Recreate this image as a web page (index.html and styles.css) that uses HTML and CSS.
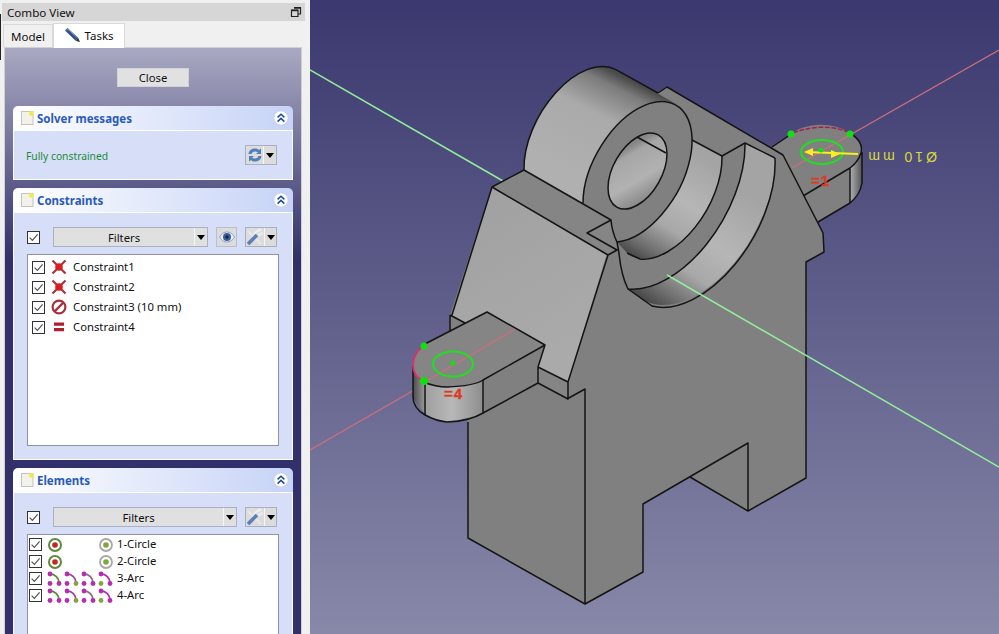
FILE: index.html
```html
<!DOCTYPE html>
<html lang="en">
<head>
<meta charset="utf-8">
<title>Combo View</title>
<link rel="stylesheet" href="styles.css">
</head>
<body>
<svg class="defs" width="0" height="0" aria-hidden="true">
  <defs>
    <symbol id="page" viewBox="0 0 13 14">
      <rect x="0.5" y="0.5" width="11.5" height="13" fill="#f2f2ea" stroke="#c4c4bc"/>
      <circle cx="10.5" cy="2.5" r="2.4" fill="#f4e94c"/>
    </symbol>
    <symbol id="collapse" viewBox="0 0 16 16">
      <circle cx="8" cy="8" r="7.2" fill="#fff" stroke="#c5cfe8"/>
      <path d="M4.6 7.4 8 4.2l3.4 3.2M4.6 11.6 8 8.4l3.4 3.2" fill="none" stroke="#1d4a9c" stroke-width="1.5"/>
    </symbol>
    <symbol id="caret" viewBox="0 0 8 5">
      <path d="M0 0h8L4 5z" fill="#000"/>
    </symbol>
    <symbol id="tick" viewBox="0 0 13 13">
      <rect x="0.5" y="0.5" width="12" height="12" fill="#fff" stroke="#333"/>
      <path d="M2.6 6.6 5.4 9.4 10.6 3.4" fill="none" stroke="#555" stroke-width="1.2"/>
    </symbol>
    <symbol id="coincident" viewBox="0 0 16 16">
      <path d="M1.5 1.5 14.5 14.5M14.5 1.5 1.5 14.5" stroke="#a8343f" stroke-width="2.2"/>
      <circle cx="8" cy="8" r="3.8" fill="#d81e1e"/>
    </symbol>
    <symbol id="diameter" viewBox="0 0 16 16">
      <circle cx="8" cy="8" r="6.4" fill="none" stroke="#a8303c" stroke-width="2.2"/>
      <path d="M3.4 12.6 12.6 3.4" stroke="#a8303c" stroke-width="2.2"/>
    </symbol>
    <symbol id="equal" viewBox="0 0 16 16">
      <path d="M3 3.5h10v3.2H3zM3 9h10v3.2H3z" fill="#b0202c"/>
    </symbol>
    <symbol id="circle-el" viewBox="0 0 16 16">
      <circle cx="8" cy="8" r="6" fill="#fff" stroke="#5f8a3c" stroke-width="2"/>
      <circle cx="8" cy="8" r="2.8" fill="#c42626"/>
    </symbol>
    <symbol id="circle-pt" viewBox="0 0 16 16">
      <circle cx="8" cy="8" r="6" fill="#fff" stroke="#a8a8a8" stroke-width="1.8"/>
      <circle cx="8" cy="8" r="2.8" fill="#7fa83c"/>
    </symbol>
    <symbol id="arc-a" viewBox="0 0 16 16">
      <path d="M3 3C8 3 12 7 12 12" fill="none" stroke="#5f8a3c" stroke-width="1.8"/>
      <circle cx="3" cy="3" r="2.4" fill="#b52eb0"/><circle cx="3" cy="12.5" r="2.4" fill="#b52eb0"/><circle cx="12" cy="12.5" r="2.4" fill="#b52eb0"/>
    </symbol>
    <symbol id="arc-b" viewBox="0 0 16 16">
      <path d="M3 3C8 3 12 7 12 12" fill="none" stroke="#a0489a" stroke-width="1.8"/>
      <circle cx="3" cy="3" r="2.4" fill="#b52eb0"/><circle cx="3" cy="12.5" r="2.4" fill="#b52eb0"/><circle cx="12" cy="12.5" r="2.4" fill="#7fa83c"/>
    </symbol>
    <symbol id="arc-c" viewBox="0 0 16 16">
      <path d="M3 3C8 3 12 7 12 12" fill="none" stroke="#8f6a90" stroke-width="1.8"/>
      <circle cx="3" cy="3" r="2.4" fill="#b52eb0"/><circle cx="3" cy="12.5" r="2.4" fill="#b52eb0"/><circle cx="12" cy="12.5" r="2.4" fill="#b52eb0"/>
    </symbol>
    <symbol id="arc-d" viewBox="0 0 16 16">
      <path d="M3 3C8 3 12 7 12 12" fill="none" stroke="#b52eb0" stroke-width="1.8"/>
      <circle cx="3" cy="3" r="2.4" fill="#b52eb0"/><circle cx="3" cy="12.5" r="2.4" fill="#7fa83c"/><circle cx="12" cy="12.5" r="2.4" fill="#b52eb0"/>
    </symbol>
    <symbol id="tools" viewBox="0 0 18 18">
      <path d="M10 4 15 1M11 8l6-3M8 6l3-3" stroke="#eeeeee" stroke-width="2.4"/>
      <path d="M2 3 15 16" stroke="#e8e8e8" stroke-width="2"/>
      <path d="M2 16 11 7" stroke="#5b7fb8" stroke-width="3.6"/>
    </symbol>
  </defs>
</svg>

<div class="app">
  <aside class="dock">
    <div class="sliver"></div>
    <header class="dock-title">
      <span>Combo View</span>
      <svg class="float-icon" width="12" height="12" viewBox="0 0 12 12"><path d="M4 1.5h6.5v6.5H8M1.5 4H8v6.5H1.5z" fill="none" stroke="#222" stroke-width="1.2"/><path d="M4 2h6.5M1.5 4.5H8" stroke="#222" stroke-width="1.5"/></svg>
    </header>
    <nav class="tabs">
      <div class="tab">Model</div>
      <div class="tab tab-active">
        <svg width="17" height="17" viewBox="0 0 17 17"><path d="M1 3.5 3.5 1 14 10.5 12 14z" fill="#2f4f8a"/><path d="M12 14l2-3.5 2 4.500z" fill="#333"/><path d="M2.500 3.500 4 2.300 13 10.600" fill="none" stroke="#7f9bc9"/></svg>
        <span>Tasks</span>
      </div>
    </nav>
    <main class="pane">
      <div class="close-row"><button class="close-btn">Close</button></div>

      <section class="box box-solver">
        <div class="box-head">
          <svg class="page-icon" width="13" height="14"><use href="#page"/></svg>
          <h2>Solver messages</h2>
          <svg class="collapse" width="16" height="16"><use href="#collapse"/></svg>
        </div>
        <div class="box-body solver-body">
          <span class="status">Fully constrained</span>
          <div class="tool-btn">
            <span class="tool-main">
              <svg width="16" height="16" viewBox="0 0 16 16"><path d="M1.5 7C2 3 5 1.5 8 1.5c2 0 3 .5 4 1.5l2-1.500V7H9l2-1.500C10.300 4.800 9.300 4.500 8 4.500 6 4.500 5 5.500 4.500 7zM14.500 9c-.5 4-3.500 5.500-6.500 5.500-2 0-3-.5-4-1.500l-2 1.500V9h5l-2 1.500c.7.7 1.700 1 3 1 2 0 3-1 3.500-2.500z" fill="#4f7fbd"/></svg>
            </span>
            <span class="tool-arrow"><svg width="8" height="5"><use href="#caret"/></svg></span>
          </div>
        </div>
      </section>

      <section class="box box-constraints">
        <div class="box-head">
          <svg class="page-icon" width="13" height="14"><use href="#page"/></svg>
          <h2>Constraints</h2>
          <svg class="collapse" width="16" height="16"><use href="#collapse"/></svg>
        </div>
        <div class="box-body list-body">
          <div class="filter-row">
            <svg class="head-check" width="13" height="13"><use href="#tick"/></svg>
            <div class="combo">
              <span class="combo-label">Filters</span>
              <span class="combo-arrow"><svg width="8" height="5"><use href="#caret"/></svg></span>
            </div>
            <div class="eye-btn">
              <svg width="16" height="12" viewBox="0 0 16 12"><path d="M.5 6C3 2 5.5 1 8 1s5 1 7.5 5C13 10 10.5 11 8 11S3 10 .5 6z" fill="#e8edf6" stroke="#8aa0c4"/><circle cx="8" cy="6" r="4" fill="#3d5f9c"/><circle cx="8" cy="6" r="1.8" fill="#16264a"/></svg>
            </div>
            <div class="tool-btn">
              <span class="tool-main"><svg width="18" height="18"><use href="#tools"/></svg></span>
              <span class="tool-arrow"><svg width="8" height="5"><use href="#caret"/></svg></span>
            </div>
          </div>
          <ul class="list list-constraints">
            <li><svg width="13" height="13"><use href="#tick"/></svg><svg class="row-icon" width="16" height="16"><use href="#coincident"/></svg><span class="row-text">Constraint1</span></li>
            <li><svg width="13" height="13"><use href="#tick"/></svg><svg class="row-icon" width="16" height="16"><use href="#coincident"/></svg><span class="row-text">Constraint2</span></li>
            <li><svg width="13" height="13"><use href="#tick"/></svg><svg class="row-icon" width="16" height="16"><use href="#diameter"/></svg><span class="row-text">Constraint3 (10 mm)</span></li>
            <li><svg width="13" height="13"><use href="#tick"/></svg><svg class="row-icon" width="16" height="16"><use href="#equal"/></svg><span class="row-text">Constraint4</span></li>
          </ul>
        </div>
      </section>

      <section class="box box-elements">
        <div class="box-head">
          <svg class="page-icon" width="13" height="14"><use href="#page"/></svg>
          <h2>Elements</h2>
          <svg class="collapse" width="16" height="16"><use href="#collapse"/></svg>
        </div>
        <div class="box-body list-body">
          <div class="filter-row">
            <svg class="head-check" width="13" height="13"><use href="#tick"/></svg>
            <div class="combo combo-wide">
              <span class="combo-label">Filters</span>
              <span class="combo-arrow"><svg width="8" height="5"><use href="#caret"/></svg></span>
            </div>
            <div class="tool-btn">
              <span class="tool-main"><svg width="18" height="18"><use href="#tools"/></svg></span>
              <span class="tool-arrow"><svg width="8" height="5"><use href="#caret"/></svg></span>
            </div>
          </div>
          <ul class="list list-elements">
            <li><svg width="13" height="13"><use href="#tick"/></svg><span class="icons"><svg width="16" height="16"><use href="#circle-el"/></svg><i></i><i></i><svg width="16" height="16"><use href="#circle-pt"/></svg></span><span class="row-text">1-Circle</span></li>
            <li><svg width="13" height="13"><use href="#tick"/></svg><span class="icons"><svg width="16" height="16"><use href="#circle-el"/></svg><i></i><i></i><svg width="16" height="16"><use href="#circle-pt"/></svg></span><span class="row-text">2-Circle</span></li>
            <li><svg width="13" height="13"><use href="#tick"/></svg><span class="icons"><svg width="16" height="16"><use href="#arc-a"/></svg><svg width="16" height="16"><use href="#arc-b"/></svg><svg width="16" height="16"><use href="#arc-c"/></svg><svg width="16" height="16"><use href="#arc-d"/></svg></span><span class="row-text">3-Arc</span></li>
            <li><svg width="13" height="13"><use href="#tick"/></svg><span class="icons"><svg width="16" height="16"><use href="#arc-a"/></svg><svg width="16" height="16"><use href="#arc-b"/></svg><svg width="16" height="16"><use href="#arc-c"/></svg><svg width="16" height="16"><use href="#arc-d"/></svg></span><span class="row-text">4-Arc</span></li>
          </ul>
        </div>
      </section>
    </main>
  </aside>

  <div class="viewport">
    <svg class="scene" width="689" height="634" viewBox="310 0 689 634">
      <defs>
        <linearGradient id="gBack" gradientUnits="userSpaceOnUse" x1="590" y1="185" x2="640" y2="85">
          <stop offset="0" stop-color="#b0b0b0"/><stop offset=".6" stop-color="#aaaaaa"/><stop offset=".88" stop-color="#7c7c7c"/><stop offset="1" stop-color="#4a4a4a"/>
        </linearGradient>
        <linearGradient id="gBand4" gradientUnits="userSpaceOnUse" x1="640" y1="305" x2="725" y2="180">
          <stop offset="0" stop-color="#3a3a3a"/><stop offset=".16" stop-color="#6e6e6e"/><stop offset=".36" stop-color="#a8a8a8"/><stop offset=".6" stop-color="#b6b6b6"/><stop offset="1" stop-color="#a4a4a4"/>
        </linearGradient>
        <linearGradient id="gBand2" gradientUnits="userSpaceOnUse" x1="625" y1="258" x2="690" y2="150">
          <stop offset="0" stop-color="#3a3a3a"/><stop offset=".16" stop-color="#6e6e6e"/><stop offset=".38" stop-color="#a8a8a8"/><stop offset=".62" stop-color="#b6b6b6"/><stop offset="1" stop-color="#a4a4a4"/>
        </linearGradient>
        <linearGradient id="gHole" gradientUnits="userSpaceOnUse" x1="618" y1="206" x2="658" y2="137">
          <stop offset="0" stop-color="#333"/><stop offset=".14" stop-color="#8a8a8a"/><stop offset=".4" stop-color="#b2b2b2"/><stop offset=".72" stop-color="#a6a6a6"/><stop offset=".8" stop-color="#8c8c8c"/><stop offset="1" stop-color="#6c6c6c"/>
        </linearGradient>
        <linearGradient id="gBlock" gradientUnits="userSpaceOnUse" x1="480" y1="220" x2="560" y2="350">
          <stop offset="0" stop-color="#a2a2a2"/><stop offset="1" stop-color="#aaaaaa"/>
        </linearGradient>
        <linearGradient id="gTabSide" gradientUnits="userSpaceOnUse" x1="413" y1="0" x2="484" y2="0">
          <stop offset="0" stop-color="#4c4c4c"/><stop offset=".18" stop-color="#a0a0a0"/><stop offset=".55" stop-color="#b8b8b8"/><stop offset="1" stop-color="#8c8c8c"/>
        </linearGradient>
        <linearGradient id="gArmSide" gradientUnits="userSpaceOnUse" x1="850" y1="0" x2="863" y2="0">
          <stop offset="0" stop-color="#b0b0b0"/><stop offset="1" stop-color="#4c4c4c"/>
        </linearGradient>
      </defs>

      <!-- axes behind the part -->
      <g class="axis-green"><path d="M310 70 503 181"/></g>
      <g class="axis-red"><path d="M310 450 416 389"/></g>

      <!-- right arm -->
      <path class="face" d="M772 147 790 135A37 22 0 0 1 850 133Q864 142 862 153V183Q860 195 850 203L818 222 783 155z"/>
      <path fill="url(#gArmSide)" d="M850 168Q860 162 862 150V183Q860 195 850 203z"/>
      <path class="edge" d="M772 147 790 135M850 133Q864 142 861 153Q858 162 850 168L803 196M850 168V203M862 152V183Q860 195 850 203L818 222"/>

      <!-- main body -->
      <path class="face" d="M450 315 492 187 524 170 667 87 783 155 823 233 824 252 806 262V478L748 511 690 477 643 504V572L585 604 468 538V422L450 390z"/>

      <!-- rear cylinder, plate, stepped bands, ring -->
      <path fill="url(#gBack)" d="M524 170A77 44.6 -60 0 1 615.5 69.3L676 104 637 171 583 203z"/>
      <path class="face" d="M658 93 667 87 783 155 775 158 745 143 722 156 692 140 680 105z"/>
      <path fill="url(#gBand4)" d="M775 158A109.5 63.4 -60 0 1 643 300L628 289A109.5 63.4 -60 0 0 745 143z"/>
      <path fill="url(#gBand2)" d="M722 156A77 44.6 -60 0 1 629 255L617 242A77 44.6 -60 0 0 692 140z"/>
      <ellipse class="face" cx="637.5" cy="171" rx="77" ry="44.6" transform="rotate(-60 637.5 171)"/>
      <ellipse fill="url(#gHole)" cx="637.5" cy="171" rx="41.6" ry="24.1" transform="rotate(-60 637.5 171)"/>

      <!-- left block -->
      <path fill="url(#gBlock)" d="M492 188 607 253 568 382 538 367 545 345 487 312 465 323 452 315z"/>
      <path class="face-top" d="M492 187 524 170 611 220 613 232 617 250 608 255z"/>
      <path class="face-top" d="M538 367 568 382 567 399 538 383z"/>

      <!-- left tab -->
      <path class="face-top" d="M487 312 545 345 483 380Q474 386 447 387 436 387 423 382 413 376 413 365 413 354 423 345z"/>
      <path class="face" d="M483 380 545 345 538 367V383L483 413z"/>
      <path fill="url(#gTabSide)" d="M413 365Q414 376 425 382 436 387 447 387 474 386 483 380V413Q470 421 447 422 425 421 413 397z"/>

      <!-- part outlines -->
      <path class="edge" d="M468 422V538L585 604 643 572V504L748 443V511L806 478V262L824 252 823 233 783 155 667 87 658 93M690 477 748 511M585 604V389L567 399"/>
      <path class="edge" d="M524 170A77 44.6 -60 0 1 615.5 69.3L658 93"/>
      <path class="edge" d="M692 140 722 156 745 143 775 158"/>
      <path class="edge" d="M722 156A77 44.6 -60 0 1 640 259L627 253"/>
      <path class="edge" d="M745 143A109.5 63.4 -60 0 1 628 289Q621 275 619 253"/>
      <path class="edge" d="M775 158A109.5 63.4 -60 0 1 652 306L628 289"/>
      <path class="edge" d="M583 203A77 44.6 -60 1 1 617 242"/>
      <ellipse class="edge" cx="637.5" cy="171" rx="41.6" ry="24.1" transform="rotate(-60 637.5 171)"/>
      <path class="edge" d="M637 137 666 153"/>
      <path class="edge" d="M452 315 492 187 524 170 611 220Q612 232 617 242L619 253M611 220 587 233 617 250 608 255 492 187M608 255 568 382V399L538 383 538 367 568 382M450 315V332M450 315 465 323M538 367 545 345 487 312 423 345M483 380 545 345M538 383 483 413"/>
      <path class="edge" d="M423 382Q436 387 447 387 474 386 483 380V413Q470 421 447 422 436 421 425 415 413 408 413 397V365M425 382V415"/>

      <!-- axes over the part -->
      <g class="axis-red"><path d="M423 383 515 329M792 168 999 50"/></g>
      <g class="axis-green"><path d="M667 275 999 467"/></g>

      <!-- sketch overlay, left -->
      <path class="sk-pink" d="M423 346Q413 354 413 365 413 376 423 381"/>
      <ellipse class="sk-circle" cx="453" cy="364" rx="20" ry="12.5"/>
      <circle class="sk-point" cx="453" cy="363" r="2.5"/>
      <circle class="sk-point" cx="424" cy="346" r="3.5"/>
      <circle class="sk-point" cx="424" cy="381" r="4"/>
      <text class="sk-label" x="444" y="399">=4</text>

      <!-- sketch overlay, right -->
      <path class="sk-dash" d="M793 133Q822 122 848 132"/>
      <ellipse class="sk-circle" cx="822" cy="152" rx="21" ry="12"/>
      <circle class="sk-point" cx="791" cy="134" r="3.5"/>
      <circle class="sk-point" cx="850" cy="134" r="3.5"/>
      <text class="sk-label" x="811" y="186">=1</text>
      <path class="dim-line" d="M806 152 858 154"/>
      <path class="dim-head" d="M804 152 813 148V156zM840 154 831 150V158z"/>
      <circle class="sk-point" cx="821" cy="150" r="2.5"/>
      <text class="dim-text" x="867" y="162" transform="rotate(180 902 157)">Ø10 mm</text>
    </svg>
  </div>
</div>
</body>
</html>
```

FILE: styles.css
```css
* { box-sizing: border-box; }
html, body { margin: 0; padding: 0; height: 100%; overflow: hidden; }
body { font-family: "Noto Sans", "Open Sans", sans-serif; font-size: 11.3px; color: #111; }
.defs { position: absolute; }
.app { display: flex; width: 999px; height: 634px; overflow: hidden; }

.dock { position: relative; flex: 0 0 310px; background: #f0f0f0; padding: 3px 5px 0 2px; display: flex; flex-direction: column; }
.sliver { position: absolute; left: 0; top: 14px; width: 1px; height: 46px; background: #222; }
.dock-title { height: 18px; flex: none; background: #d6d6d6; display: flex; align-items: center; justify-content: space-between; padding: 0 3px 0 5px; font-size: 11.6px; }
.float-icon { display: block; }

.tabs { flex: none; display: flex; align-items: flex-end; height: 26px; padding-left: 1px; }
.tab { height: 23px; width: 50px; background: #f0f0f0; border: 1px solid #d9d9d9; border-bottom: 0; display: flex; align-items: center; justify-content: center; font-size: 11.5px; }
.tab-active { width: 72px; height: 25px; background: #fff; border-bottom: 0; gap: 3px; margin-bottom: -1px; position: relative; padding-bottom: 2px; }

.pane { flex: 1; min-height: 0; margin: 0 0 0 2px; width: 298px; border: 1px solid #d0d0d0; border-bottom: 0; background: linear-gradient(180deg, #a9a9c2 0, #32306a 212px, #32306a 100%); padding: 0 8px; display: flex; flex-direction: column; overflow: hidden; }
.close-row { flex: none; height: 58px; display: flex; justify-content: center; padding: 20px 0 0; }
.close-btn { width: 72px; height: 19px; background: #e1e1e1; border: 1px solid #d2d2da; padding: 0 0 1px; font: inherit; color: #111; }

.box { flex: none; width: 280px; margin-bottom: 8px; }
.box-head { height: 25px; border-radius: 5px 5px 0 0; border-bottom: 1px solid #fff; background: linear-gradient(90deg, #fff 0, #c6d3f7 100%); display: flex; align-items: center; padding: 0 4px 0 8px; }
.box-head h2 { margin: 0 0 0 3px; flex: 1; font-size: 11.5px; font-weight: 700; color: #2a5ab8; }
.page-icon { flex: none; display: block; }
.collapse { flex: none; display: block; }
.box-body { background: #d6dff7; border: 1px solid #fff; border-top: 0; }

.solver-body { height: 49px; display: flex; align-items: center; justify-content: space-between; padding: 0 15px 0 12px; }
.status { color: #1f8a3a; font-size: 10.3px; padding-top: 2px; }

.tool-btn { flex: none; width: 32px; height: 20px; display: flex; background: #dcdcdc; border: 1px solid #a9b0c4; }
.tool-main { flex: 1; display: flex; align-items: center; justify-content: center; border-right: 1px solid #f6f6f6; }
.tool-arrow { width: 12px; display: flex; align-items: center; justify-content: center; }
.tool-arrow svg, .combo-arrow svg { display: block; }

.list-body { padding: 14px 14px 0 13px; }
.box-constraints .list-body { height: 247px; }
.box-elements .list-body { height: 200px; }
.filter-row { display: flex; align-items: center; height: 20px; }
.head-check { flex: none; margin-right: 13px; }
.combo { flex: none; width: 155px; height: 20px; display: flex; background: #e0e0e0; border: 1px solid #a9b0c4; margin-right: 8px; }
.combo-wide { width: 184px; }
.combo-label { flex: 1; text-align: center; line-height: 19px; border-right: 1px solid #f6f6f6; }
.combo-arrow { width: 12px; display: flex; align-items: center; justify-content: center; }
.eye-btn { flex: none; width: 21px; height: 20px; margin-right: 8px; background: #dcdcdc; border: 1px solid #b9bfd0; display: flex; align-items: center; justify-content: center; }

.list { list-style: none; margin: 7px 0 0; padding: 2px 4px; width: 252px; background: #fff; border: 1px solid #8f93a8; }
.list li { display: flex; align-items: center; }
.list li > svg { flex: none; }
.row-text { margin-bottom: 2px; }
.list-constraints { height: 192px; }
.list-constraints li { height: 20px; }
.row-icon { margin-left: 6px; margin-right: 6px; }
.box-elements .list { height: 120px; padding: 1px 1px; }
.list-elements li { height: 17px; }
.icons { display: flex; gap: 1px; margin: 0 3px 0 5px; }
.icons svg { display: block; }
.icons i { display: block; width: 16px; }

.viewport { flex: 1; background: linear-gradient(180deg, #3a386e 0, #8888a9 100%); overflow: hidden; }
.scene { display: block; }
.face { fill: #808080; }
.face-top { fill: #858585; }
.edge { fill: none; stroke: #141414; stroke-width: 1.5; stroke-linejoin: round; }
.axis-green path { fill: none; stroke: #93ee9b; stroke-width: 1.5; }
.axis-red path { fill: none; stroke: #cc6f7c; stroke-width: 1.3; }
.sk-pink { fill: none; stroke: #d8326e; stroke-width: 2; }
.sk-dash { fill: none; stroke: #a5204f; stroke-width: 1.5; stroke-dasharray: 5 1.5; }
.sk-circle { fill: none; stroke: #1fe01f; stroke-width: 2; }
.sk-point { fill: #10e010; }
.sk-label { font-family: "Liberation Sans", sans-serif; font-size: 15px; font-weight: 700; fill: #dd3a22; stroke: #dd3a22; stroke-width: .4; letter-spacing: 1px; }
.dim-line { fill: none; stroke: #f6f01e; stroke-width: 2; }
.dim-head { fill: #f6f01e; }
.dim-text { font-family: "Liberation Sans", sans-serif; font-size: 14px; letter-spacing: 3px; fill: #d8d83c; }
```
